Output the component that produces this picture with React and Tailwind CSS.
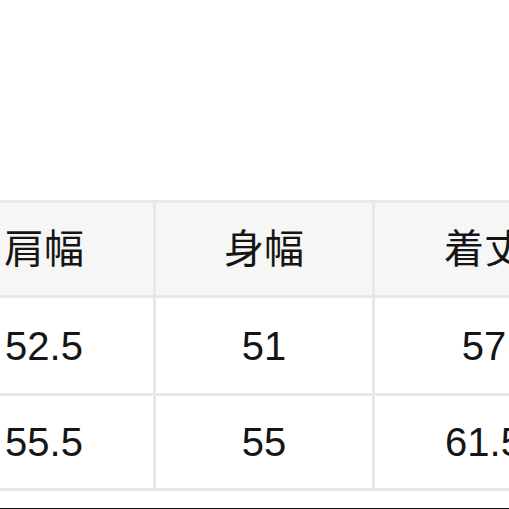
export default function App() {
  const header = ["肩幅", "身幅", "着丈"];
  const rows = [
    ["52.5", "51", "57"],
    ["55.5", "55", "61.5"],
  ];
  const font = { fontFamily: '"Liberation Sans", "Noto Sans CJK JP", sans-serif' };
  return (
    <div className="w-[509px] h-[509px] overflow-hidden bg-white flex flex-col" style={font}>
      <div className="pt-[200px] ml-[-68px]">
        <div className="grid grid-cols-[218px_216px_218px] grid-rows-[92px_95px_92px] gap-[3px] p-[3px] bg-[#e8e8e8] w-max text-[40px] leading-none text-[#151515]">
          {header.map((h) => (
            <div key={h} className="bg-[#f6f6f6] flex items-center justify-center">
              {h}
            </div>
          ))}
          {rows.flat().map((v, i) => (
            <div key={i} className="bg-white flex items-center justify-center">
              {v}
            </div>
          ))}
        </div>
      </div>
      <div className="mt-auto h-px bg-[#111]" />
    </div>
  );
}
